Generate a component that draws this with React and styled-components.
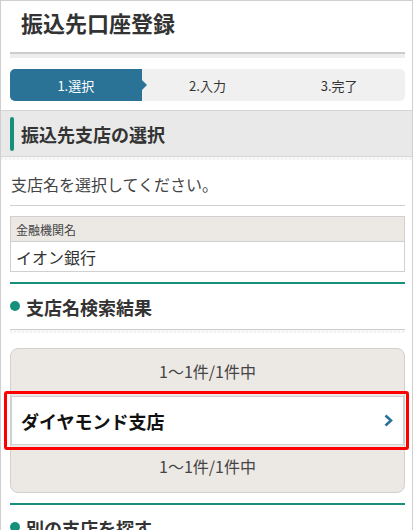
import * as React from 'react';
import styled, { createGlobalStyle } from 'styled-components';

const GlobalStyle = createGlobalStyle`
  body {
    margin: 0;
    background: #fff;
    font-family: "Noto Sans CJK JP", "Noto Sans", sans-serif;
    color: #333;
  }
`;

const green = '#16907a';
const blue = '#2a7397';

const Frame = styled.div`
  box-sizing: border-box;
  width: 413px;
  height: 530px;
  overflow: hidden;
  border: 1px solid #cfcfcf;
  border-bottom: none;
`;

const TitleBar = styled.div`
  padding: 6px 20px 14px;
`;

const Title = styled.h1`
  margin: 0;
  font-size: 22px;
  line-height: 31px;
  font-weight: 700;
  color: #333;
`;

const GrayRule = styled.div`
  margin: 0 7px 0 9px;
  height: 4px;
  border-top: 2px solid #cccccc;
  background: #eeeeee;
`;

const Steps = styled.div`
  display: grid;
  grid-template-columns: repeat(3, 1fr);
  margin: 11px 7px 0 9px;
  height: 32px;
  border-radius: 5px;
  background: #f0f0f0;
`;

const Step = styled.div`
  position: relative;
  display: flex;
  align-items: center;
  justify-content: center;
  font-size: 13px;
  color: ${p => (p.$active ? '#fff' : '#333')};
  background: ${p => (p.$active ? blue : 'transparent')};
  border-radius: ${p => (p.$active ? '5px 0 0 5px' : '0')};

  &::after {
    content: '';
    display: ${p => (p.$active ? 'block' : 'none')};
    position: absolute;
    right: -5px;
    top: 50%;
    margin-top: -5px;
    border-left: 5px solid ${blue};
    border-top: 5px solid transparent;
    border-bottom: 5px solid transparent;
  }
`;

const SectionHeader = styled.div`
  display: flex;
  align-items: center;
  gap: 7px;
  margin-top: 9px;
  padding: 6px 9px 5px;
  background: #e9e9e9;
  border-top: 1px solid #d4d4d4;
  border-bottom: 1px solid #d8d8d8;
`;

const GreenBar = styled.span`
  width: 4px;
  height: 34px;
  border-radius: 2px;
  background: ${green};
`;

const SectionTitle = styled.h2`
  margin: 0;
  font-size: 18px;
  font-weight: 700;
  color: #333;
`;

const Band = styled.div`
  height: 3px;
  background: repeating-linear-gradient(90deg, #f2f2f2 0 2px, #fafafa 2px 4px);
`;

const Content = styled.div`
  margin: 0 7px 0 9px;
`;

const Intro = styled.p`
  margin: 0;
  padding: 12px 1px 9px;
  font-size: 16px;
  line-height: 24px;
  color: #444;
  border-bottom: 1px solid #d0d0d0;
`;

const InfoBox = styled.div`
  margin-top: 10px;
  border: 1px solid #d0d0d0;
`;

const InfoLabel = styled.div`
  height: 24px;
  padding: 0 5px;
  display: flex;
  align-items: center;
  font-size: 12px;
  color: #444;
  background: #ece8e4;
  border-bottom: 1px solid #d0d0d0;
`;

const InfoValue = styled.div`
  height: 29px;
  padding: 0 5px;
  display: flex;
  align-items: center;
  font-size: 16px;
  color: #333;
`;

const GreenRule = styled.div`
  margin-top: 10px;
  height: 2px;
  background: ${green};
`;

const DotHeading = styled.h3`
  display: flex;
  align-items: center;
  gap: 6px;
  margin: 0;
  padding: 10px 0 8px;
  font-size: 18px;
  line-height: 27px;
  font-weight: 700;
  color: #333;
  border-bottom: ${p => (p.$ruled ? '1px solid #cfcfcf' : 'none')};

  &::before {
    content: '';
    width: 10px;
    height: 10px;
    border-radius: 50%;
    background: ${green};
    margin-top: -3px;
  }
`;

const Results = styled.div`
  margin-top: 15px;
  border: 1px solid #d4d0cc;
  border-radius: 8px;
  background: #ece8e4;
`;

const Count = styled.div`
  padding: ${p => (p.$bottom ? '9px 0 14px' : '10px 0 13px')};
  text-align: center;
  font-size: 16px;
  line-height: 24px;
  color: #444;
`;

const ItemWrap = styled.div`
  position: relative;
`;

const Item = styled.div`
  box-sizing: border-box;
  height: 49px;
  display: flex;
  align-items: center;
  justify-content: space-between;
  padding: 0 10px 0 9px;
  background: #fff;
  border: 1px solid #d0d0d0;
  font-size: 18px;
  font-weight: 700;
  color: #111;
`;

const Highlight = styled.div`
  position: absolute;
  top: -5px;
  right: -5px;
  bottom: -5px;
  left: -7px;
  border: 3px solid #ff0000;
  border-radius: 3px;
  pointer-events: none;
`;

const Chevron = () => (
  <svg width="9" height="13" viewBox="0 0 9 13">
    <polyline points="1.5,1.5 7,6.5 1.5,11.5" fill="none" stroke={blue} strokeWidth="2.6" />
  </svg>
);

const App = () => {
  return (
    <>
      <GlobalStyle />
      <Frame>
        <TitleBar>
          <Title>振込先口座登録</Title>
        </TitleBar>
        <GrayRule />
        <Steps>
          <Step $active>1.選択</Step>
          <Step>2.入力</Step>
          <Step>3.完了</Step>
        </Steps>
        <SectionHeader>
          <GreenBar />
          <SectionTitle>振込先支店の選択</SectionTitle>
        </SectionHeader>
        <Band />
        <Content>
          <Intro>支店名を選択してください。</Intro>
          <InfoBox>
            <InfoLabel>金融機関名</InfoLabel>
            <InfoValue>イオン銀行</InfoValue>
          </InfoBox>
          <GreenRule />
          <DotHeading $ruled>支店名検索結果</DotHeading>
        </Content>
        <Band style={{ margin: '0 7px 0 9px' }} />
        <Content>
          <Results>
            <Count>1〜1件/1件中</Count>
            <ItemWrap>
              <Item>
                ダイヤモンド支店
                <Chevron />
              </Item>
              <Highlight />
            </ItemWrap>
            <Count $bottom>1〜1件/1件中</Count>
          </Results>
          <GreenRule />
          <DotHeading>別の支店を探す</DotHeading>
        </Content>
      </Frame>
    </>
  );
};

export default App;
